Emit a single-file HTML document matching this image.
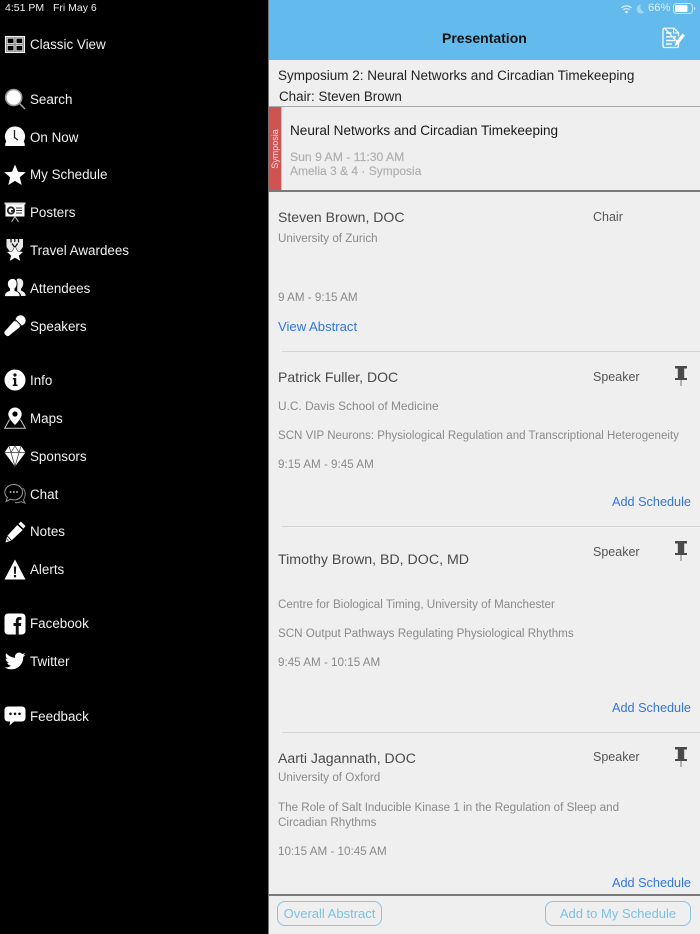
<!DOCTYPE html>
<html>
<head>
<meta charset="utf-8">
<style>
html,body{margin:0;padding:0;background:#000;}
body{width:700px;height:934px;position:relative;overflow:hidden;font-family:"Liberation Sans",sans-serif;}
.t{position:absolute;white-space:nowrap;line-height:20px;height:20px;}
.m{left:30px;color:#f2f2f2;font-size:13.4px;}
.i{position:absolute;left:4px;width:22px;height:22px;}
.n{left:278px;color:#4a4a4a;font-size:14.05px;}
.g{left:278px;color:#8a8a8a;font-size:11.65px;}
.r{color:#555;font-size:12.5px;}
.a{color:#2f76e8;font-size:12.7px;}
.l{position:absolute;left:282px;right:0;height:1px;background:#d4d4d4;}
.btn{position:absolute;top:901px;height:23px;border:1px solid #84c5ea;border-radius:8px;color:#7cc0e8;font-size:13px;line-height:23px;text-align:center;box-sizing:content-box;}
</style>
</head>
<body>
<div style="position:absolute;left:0;top:0;width:268px;height:934px;background:#000"></div>
<div style="position:absolute;left:268px;top:0;width:1px;height:934px;background:#777"></div>
<div style="position:absolute;left:269px;top:0;width:431px;height:934px;background:#efefef"></div>
<div style="position:absolute;left:269px;top:0;width:431px;height:60px;background:#62bbec"></div>

<div class="t" style="left:5px;top:-2px;color:#eee;font-size:10.5px;">4:51 PM</div>
<div class="t" style="left:53px;top:-2px;color:#eee;font-size:10.5px;">Fri May 6</div>

<svg class="i" style="top:33px" viewBox="0 0 22 22"><rect x="1.500" y="3.500" width="19" height="16" fill="#8a8a8a" stroke="#f2f2f2" stroke-width="1.100"/><rect x="3.300" y="5.200" width="6.600" height="5.300" fill="#000" stroke="#eee" stroke-width=".8"/><rect x="12.100" y="5.200" width="6.600" height="5.300" fill="#000" stroke="#eee" stroke-width=".8"/><rect x="3.300" y="12.500" width="6.600" height="5.300" fill="#000" stroke="#eee" stroke-width=".8"/><rect x="12.100" y="12.500" width="6.600" height="5.300" fill="#000" stroke="#eee" stroke-width=".8"/></svg>
<div class="t m" style="top:35px">Classic View</div>

<svg class="i" style="top:88px" viewBox="0 0 22 22"><circle cx="9.700" cy="9.500" r="8" fill="#fff" stroke="#999" stroke-width="1.600"/><path d="M15.500 15.500L21 21" stroke="#aaa" stroke-width="1.400"/></svg>
<div class="t m" style="top:90px">Search</div>

<svg class="i" style="top:126px" viewBox="0 0 22 22"><path d="M11 0.500a10 10 0 0 1 8.700 15c.8 1 1.300 2.800 1 4.500H1.300C1 18.300 1.500 16.500 2.300 15.500A10 10 0 0 1 11 .5z" fill="#fff"/><path d="M10.500 4V11.500L14 14" stroke="#222" stroke-width="1.300" fill="none"/></svg>
<div class="t m" style="top:128px">On Now</div>

<svg class="i" style="top:164px" viewBox="0 0 22 22"><path d="M11 .5l3 7.200 7.800.6-6 5 1.900 7.700L11 16.900l-6.700 4.100 1.900-7.700-6-5 7.800-.6z" fill="#fff"/></svg>
<div class="t m" style="top:165px">My Schedule</div>

<svg class="i" style="top:201px" viewBox="0 0 22 22"><rect x=".5" y="1.500" width="21" height="2" fill="#ddd"/><rect x="1.500" y="3.500" width="19" height="12" fill="#fff"/><circle cx="7" cy="9.500" r="3.200" fill="none" stroke="#222" stroke-width="1.800"/><rect x="7" y="9" width="3" height="1.800" fill="#222"/><path d="M12 7h6M12 9.500h6M12 12h6" stroke="#333" stroke-width="1.100"/><path d="M11 15.500L7.500 21M11 15.500l3.500 5.500" stroke="#bbb" stroke-width="1.100"/></svg>
<div class="t m" style="top:203px">Posters</div>

<svg class="i" style="top:239px" viewBox="0 0 22 22"><path d="M2.500 0h16.500v8l-3 4H5.500l-3-4z" fill="#e8e8e8"/><path d="M7 0v3.500M10.800 0v3M14.500 0v3.500M8 4.500l2.800 4 2.800-4" stroke="#111" stroke-width="1.300" fill="none"/><path d="M11 7l2.600 5.100 6 .6-4.500 3.900 1.500 5.700L11 19l-5.600 3.300 1.500-5.700-4.500-3.900 6-.6z" fill="#fff" stroke="#000" stroke-width=".5"/></svg>
<div class="t m" style="top:241px">Travel Awardees</div>

<svg class="i" style="top:277px" viewBox="0 0 22 22"><path d="M15 1.500c3 0 4.500 2.500 4.200 5.500-.2 2-1 3.600-2.200 4.700v1.800c2 .9 4.500 1.800 4.700 5.500h-4.500c-.3-2.800-2.300-3.800-4-4.800V10c.5-2 .4-5-.7-7 .6-1.200 1.400-1.500 2.500-1.500z" fill="#eee"/><path d="M8.500 1.500c3 0 4.800 2.500 4.500 5.500-.2 2-1 3.700-2.200 4.800v1.700c2.500 1 5.200 2 5.200 6H.5c0-4 2.700-5 5.200-6v-1.700C4.500 10.700 3.700 9 3.500 7 3.300 4 5.500 1.500 8.500 1.500z" fill="#fff" stroke="#000" stroke-width=".7"/></svg>
<div class="t m" style="top:279px">Attendees</div>

<svg class="i" style="top:315px" viewBox="0 0 22 22"><ellipse cx="16.500" cy="5.500" rx="5.200" ry="5.200" fill="#fff"/><path d="M10.300 5.800L16.200 11.700 5 20.800c-1 .7-2.200.4-3.500-.8-1.200-1.300-1.500-2.500-.8-3.500z" fill="#fff"/><path d="M11.200 4.500l6.300 6.300" stroke="#000" stroke-width=".9"/></svg>
<div class="t m" style="top:317px">Speakers</div>

<svg class="i" style="top:369px" viewBox="0 0 22 22"><circle cx="11" cy="11" r="10.500" fill="#fff"/><circle cx="11" cy="6" r="1.600" fill="#111"/><path d="M8.800 9h3.400v6.500h1.300v1.500H8.800v-1.500h1.200v-5H8.800z" fill="#111"/></svg>
<div class="t m" style="top:371px">Info</div>

<svg class="i" style="top:407px" viewBox="0 0 22 22"><path d="M11 .5a6.700 6.700 0 0 1 6.700 6.700c0 3.600-4 8-6.700 10.800C8.300 15.200 4.300 10.800 4.300 7.200A6.700 6.700 0 0 1 11 .5z" fill="#fff"/><circle cx="11" cy="7" r="2.600" fill="#000"/><path d="M5.500 12.500L.7 21.300h20.600L16.500 12.500" fill="none" stroke="#ccc" stroke-width="1"/></svg>
<div class="t m" style="top:409px">Maps</div>

<svg class="i" style="top:445px" viewBox="0 0 22 22"><path d="M5 1h12l4.500 6.500L11 21.500.5 7.500z" fill="#fff"/><path d="M.5 7.500h21M7 7.500L11 1l4 6.500L11 21.500zM5 1l2 6.500M17 1l-2 6.500" stroke="#333" stroke-width=".7" fill="none"/></svg>
<div class="t m" style="top:447px">Sponsors</div>

<svg class="i" style="top:483px" viewBox="0 0 22 22"><path d="M18.500 5c1.800 1.500 3 3.700 2.700 7-.2 2-1 3.800-1.800 5l1.600 3.200-4-1.500c-2 1-4 1.300-6 .8" fill="none" stroke="#888" stroke-width="1"/><path d="M10 1.500c4.800 0 8.500 3.300 8.500 7.700s-3.700 7.700-8.500 7.700c-1.300 0-2.500-.2-3.500-.7L2 18.500l1.400-4C1.700 13 .8 11.200.8 9.200.8 4.800 5.200 1.500 10 1.500z" fill="none" stroke="#999" stroke-width="1"/><circle cx="6.500" cy="9" r="1" fill="#aaa"/><circle cx="9.800" cy="9" r="1" fill="#aaa"/><circle cx="13" cy="9" r="1" fill="#aaa"/></svg>
<div class="t m" style="top:485px">Chat</div>

<svg class="i" style="top:521px" viewBox="0 0 22 22"><path d="M16.800 .5l4.700 4.500-2 2.600-5-4.700zM13.300 4L18.700 9 7.500 19.500 1.500 21.500l1.700-6.500z" fill="#fff"/><path d="M3.200 15l4.300 4.500" stroke="#000" stroke-width=".9"/><path d="M2.800 18l1.600 1.700" stroke="#777" stroke-width="1.300"/></svg>
<div class="t m" style="top:522px">Notes</div>

<svg class="i" style="top:559px" viewBox="0 0 22 22"><path d="M11 .5L21.500 20.500H.5z" fill="#fff"/><path d="M9.800 7.500h2.400l-.4 7.500h-1.600z" fill="#111"/><rect x="9.900" y="16" width="2.200" height="2.300" fill="#111"/></svg>
<div class="t m" style="top:560px">Alerts</div>

<svg class="i" style="top:613px" viewBox="0 0 22 22"><rect x=".5" y=".5" width="21" height="21" rx="3.500" fill="#fff"/><path d="M11.800 21.500v-8.500H9.500v-3h2.300V7.800c0-2.500 1.500-3.800 3.600-3.800h2v2.900h-1.400c-1 0-1.300.5-1.300 1.300V10h2.600l-.4 3H14.700v8.500z" fill="#111"/></svg>
<div class="t m" style="top:614px">Facebook</div>

<svg class="i" style="top:651px" viewBox="0 0 22 22"><path d="M21.500 3.600c-.7.400-1.500.6-2.400.7.900-.5 1.500-1.300 1.800-2.300-.8.500-1.700.8-2.600 1a4.200 4.200 0 0 0-7.200 3.800C7.600 6.600 4.400 4.900 2.300 2.300c-1.100 1.900-.6 4.300 1.300 5.600-.7 0-1.300-.2-1.900-.5 0 2 1.400 3.800 3.400 4.200-.6.200-1.300.2-1.900.1.500 1.700 2.100 2.900 3.900 2.900C5.300 16 3 16.700.7 16.500c2 1.200 4.200 1.900 6.500 1.900 7.900 0 12.300-6.600 12-12.500.9-.6 1.600-1.400 2.300-2.300z" fill="#fff"/></svg>
<div class="t m" style="top:652px">Twitter</div>

<svg class="i" style="top:705px" viewBox="0 0 22 22"><path d="M4 1.500h14c2 0 3.500 1.500 3.500 3.500v8c0 2-1.500 3.500-3.500 3.500H10L5.500 20.500l.6-4H4C2 16.500.5 15 .5 13V5C.5 3 2 1.500 4 1.500z" fill="#fff"/><circle cx="6.500" cy="8.800" r="1.300" fill="#111"/><circle cx="11" cy="8.800" r="1.300" fill="#111"/><circle cx="15.500" cy="8.800" r="1.300" fill="#111"/></svg>
<div class="t m" style="top:707px">Feedback</div>

<!-- status -->
<svg style="position:absolute;left:621px;top:5px" width="11" height="9" viewBox="0 0 11 9"><path d="M.5 3a7 7 0 0 1 10 0M2.300 4.900a4.500 4.500 0 0 1 6.400 0" fill="none" stroke="#d9effb" stroke-width="1.200"/><circle cx="5.500" cy="7" r="1.200" fill="#fff"/></svg>
<svg style="position:absolute;left:636px;top:4px" width="9" height="10" viewBox="0 0 9 10"><path d="M5 .5a4.500 4.500 0 1 0 3.500 7.500A5 5 0 0 1 5 .5z" fill="#9fd5f3"/></svg>
<div class="t" style="left:648px;top:-2px;color:#d9effb;font-size:11.200px;">66%</div>
<svg style="position:absolute;left:673px;top:3px" width="23" height="11" viewBox="0 0 23 11"><rect x=".5" y=".5" width="19" height="10" rx="3" fill="none" stroke="#bfe3f7"/><rect x="2" y="2" width="12.500" height="7" rx="1.300" fill="#fff"/><path d="M21 3.700v3.600c.9-.2 1.300-1 1.300-1.800s-.4-1.600-1.300-1.800z" fill="#bfe3f7"/></svg>

<div class="t" style="left:442px;top:28px;color:#111;font-size:14px;font-weight:bold;">Presentation</div>
<svg style="position:absolute;left:662px;top:27px" width="24" height="22" viewBox="0 0 24 22"><path d="M2.500 1.200h9.500l4.500 4.500v3.800M16.500 16v2.800c0 1-.6 1.700-1.500 1.700H2.500c-.9 0-1.500-.7-1.500-1.700V2.900c0-1 .6-1.700 1.500-1.700z" fill="none" stroke="#fff" stroke-width="1.200" stroke-linejoin="round"/><path d="M11.500 1.500v4.500h5" fill="none" stroke="#fff" stroke-width="1"/><path d="M4 6h5.500M4 9.800h10M4 13.500h9M4 17h6" stroke="#fff" stroke-width="1.400"/><path d="M20.500 6.500l2.500 2-7 9-3.300 1.500.8-3.500z" fill="#fff"/></svg>

<!-- heading -->
<div class="t" style="left:278px;top:66px;color:#222;font-size:13.500px;">Symposium 2: Neural Networks and Circadian Timekeeping</div>
<div class="t" style="left:279px;top:87px;color:#222;font-size:13.400px;">Chair: Steven Brown</div>
<div style="position:absolute;left:269px;right:0;top:106px;height:1px;background:#aaa"></div>

<div style="position:absolute;left:269px;top:107px;width:12px;height:84px;background:#cf5350"></div>
<div style="position:absolute;left:281px;top:107px;width:1px;height:84px;background:#e8b4b2"></div>
<div style="position:absolute;left:275px;top:149px;transform:translate(-50%,-50%) rotate(-90deg);color:#f7dede;font-size:9px;white-space:nowrap;line-height:12px;">Symposia</div>
<div class="t" style="left:290px;top:120.500px;color:#1a1a1a;font-size:13.550px;">Neural Networks and Circadian Timekeeping</div>
<div class="t" style="left:290px;top:147px;color:#b0b0b0;font-size:12.200px;-webkit-text-stroke:.2px #b0b0b0;">Sun 9 AM - 11:30 AM</div>
<div class="t" style="left:290px;top:161px;color:#b0b0b0;font-size:12px;-webkit-text-stroke:.2px #b0b0b0;">Amelia 3 &amp; 4 · Symposia</div>
<div style="position:absolute;left:269px;right:0;top:190px;height:2px;background:#7a7a7a"></div>

<!-- Steven -->
<div class="t n" style="top:207px">Steven Brown, DOC</div>
<div class="t r" style="left:593px;top:207px">Chair</div>
<div class="t g" style="top:229px">University of Zurich</div>
<div class="t g" style="top:288px">9 AM - 9:15 AM</div>
<div class="t a" style="left:278px;top:317px;font-size:13.100px">View Abstract</div>
<div class="l" style="top:351px"></div>

<!-- Patrick -->
<div class="t n" style="top:367px">Patrick Fuller, DOC</div>
<div class="t r" style="left:593px;top:367px">Speaker</div>
<svg style="position:absolute;left:673px;top:365px" width="16" height="21" viewBox="0 0 16 21"><path d="M2 1h12v2.500H2zM4.800 3.500h6.400v10H4.800zM2 13h12v2H2z" fill="#4a4a4a"/><rect x="7.300" y="15" width="1.400" height="6" fill="#999"/></svg>
<div class="t g" style="top:396px;font-size:11.900px">U.C. Davis School of Medicine</div>
<div class="t g" style="top:426px;font-size:11.550px;">SCN VIP Neurons: Physiological Regulation and Transcriptional Heterogeneity</div>
<div class="t g" style="top:455px">9:15 AM - 9:45 AM</div>
<div class="t a" style="right:9px;top:492px">Add Schedule</div>
<div class="l" style="top:526px"></div>

<!-- Timothy -->
<div class="t n" style="top:550px;font-size:14.200px">Timothy Brown, BD, DOC, MD</div>
<div class="t r" style="left:593px;top:542px">Speaker</div>
<svg style="position:absolute;left:673px;top:540px" width="16" height="21" viewBox="0 0 16 21"><path d="M2 1h12v2.500H2zM4.800 3.500h6.400v10H4.800zM2 13h12v2H2z" fill="#4a4a4a"/><rect x="7.300" y="15" width="1.400" height="6" fill="#999"/></svg>
<div class="t g" style="top:595px">Centre for Biological Timing, University of Manchester</div>
<div class="t g" style="top:624px">SCN Output Pathways Regulating Physiological Rhythms</div>
<div class="t g" style="top:653px">9:45 AM - 10:15 AM</div>
<div class="t a" style="right:9px;top:698px">Add Schedule</div>
<div class="l" style="top:732px"></div>

<!-- Aarti -->
<div class="t n" style="top:748px;font-size:14.100px">Aarti Jagannath, DOC</div>
<div class="t r" style="left:593px;top:747px">Speaker</div>
<svg style="position:absolute;left:673px;top:746px" width="16" height="21" viewBox="0 0 16 21"><path d="M2 1h12v2.500H2zM4.800 3.500h6.400v10H4.800zM2 13h12v2H2z" fill="#4a4a4a"/><rect x="7.300" y="15" width="1.400" height="6" fill="#999"/></svg>
<div class="t g" style="top:768px">University of Oxford</div>
<div class="t g" style="top:798px">The Role of Salt Inducible Kinase 1 in the Regulation of Sleep and</div>
<div class="t g" style="top:813px">Circadian Rhythms</div>
<div class="t g" style="top:842px">10:15 AM - 10:45 AM</div>
<div class="t a" style="right:9px;top:873px">Add Schedule</div>

<!-- footer -->
<div style="position:absolute;left:269px;right:0;top:894px;height:40px;background:#efefef"></div>
<div style="position:absolute;left:269px;right:0;top:894px;height:2px;background:#7a7a7a"></div>
<div class="btn" style="left:277px;width:103px;">Overall Abstract</div>
<div class="btn" style="left:545px;width:144px;">Add to My Schedule</div>
</body>
</html>
